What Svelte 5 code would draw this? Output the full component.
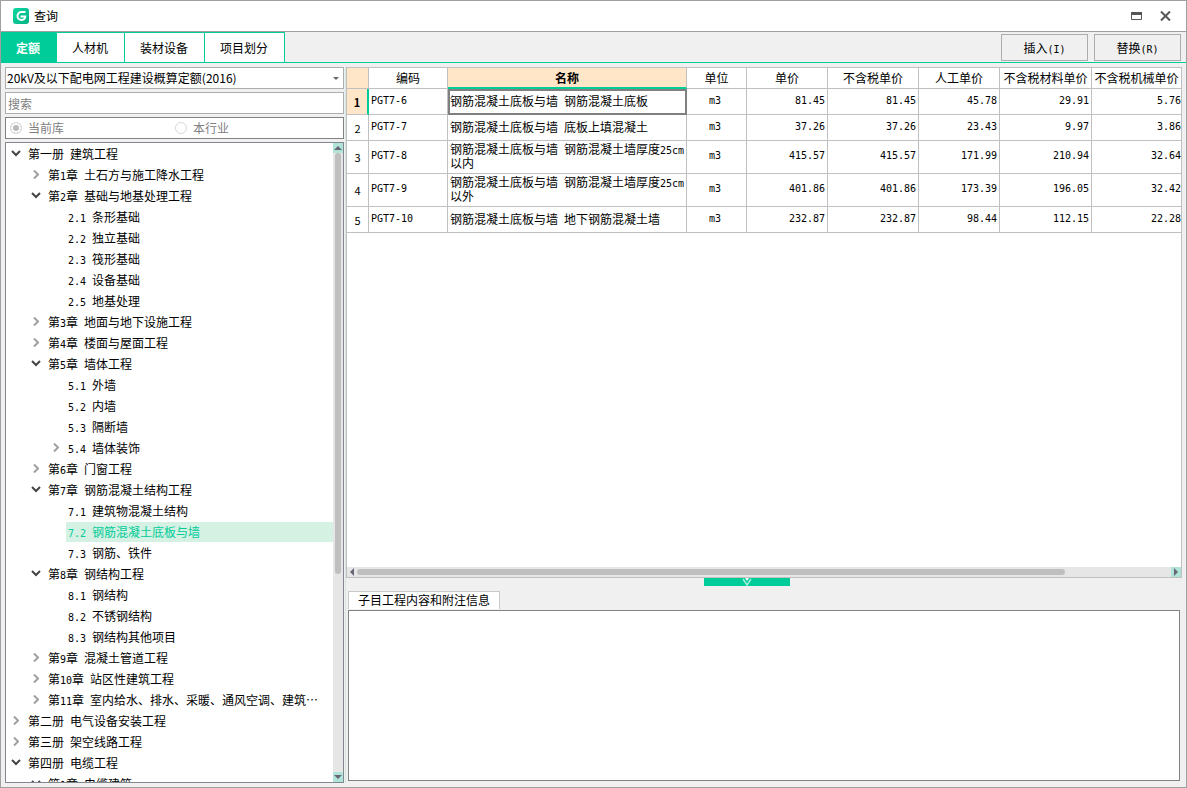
<script lang="ts">
  type Node = { text: string; depth: number; open?: boolean };

  const tabs = ['定额', '人材机', '装材设备', '项目划分'];
  let activeTab = $state('定额');
  let scope = $state('current');
  let keyword = $state('');
  let selected = $state('7.2 钢筋混凝土底板与墙');

  let nodes: Node[] = $state([
    { text: '第一册 建筑工程', depth: 0, open: true },
    { text: '第1章 土石方与施工降水工程', depth: 1, open: false },
    { text: '第2章 基础与地基处理工程', depth: 1, open: true },
    { text: '2.1 条形基础', depth: 2 },
    { text: '2.2 独立基础', depth: 2 },
    { text: '2.3 筏形基础', depth: 2 },
    { text: '2.4 设备基础', depth: 2 },
    { text: '2.5 地基处理', depth: 2 },
    { text: '第3章 地面与地下设施工程', depth: 1, open: false },
    { text: '第4章 楼面与屋面工程', depth: 1, open: false },
    { text: '第5章 墙体工程', depth: 1, open: true },
    { text: '5.1 外墙', depth: 2 },
    { text: '5.2 内墙', depth: 2 },
    { text: '5.3 隔断墙', depth: 2 },
    { text: '5.4 墙体装饰', depth: 2, open: false },
    { text: '第6章 门窗工程', depth: 1, open: false },
    { text: '第7章 钢筋混凝土结构工程', depth: 1, open: true },
    { text: '7.1 建筑物混凝土结构', depth: 2 },
    { text: '7.2 钢筋混凝土底板与墙', depth: 2 },
    { text: '7.3 钢筋、铁件', depth: 2 },
    { text: '第8章 钢结构工程', depth: 1, open: true },
    { text: '8.1 钢结构', depth: 2 },
    { text: '8.2 不锈钢结构', depth: 2 },
    { text: '8.3 钢结构其他项目', depth: 2 },
    { text: '第9章 混凝土管道工程', depth: 1, open: false },
    { text: '第10章 站区性建筑工程', depth: 1, open: false },
    { text: '第11章 室内给水、排水、采暖、通风空调、建筑…', depth: 1, open: false },
    { text: '第二册 电气设备安装工程', depth: 0, open: false },
    { text: '第三册 架空线路工程', depth: 0, open: false },
    { text: '第四册 电缆工程', depth: 0, open: true },
    { text: '第1章 电缆建筑', depth: 1, open: true },
  ]);

  // children of a closed node stay hidden until the depth comes back up
  const visibleNodes = $derived.by(() => {
    const list: Node[] = [];
    let closedAt = Infinity;
    for (const node of nodes) {
      if (node.depth > closedAt) continue;
      closedAt = node.open === false ? node.depth : Infinity;
      list.push(node);
    }
    return list;
  });

  const columns = ['编码', '名称', '单位', '单价', '不含税单价', '人工单价', '不含税材料单价', '不含税机械单价'];

  const rows = [
    { code: 'PGT7-6', name: '钢筋混凝土底板与墙 钢筋混凝土底板', unit: 'm3', prices: ['81.45', '81.45', '45.78', '29.91', '5.76'] },
    { code: 'PGT7-7', name: '钢筋混凝土底板与墙 底板上填混凝土', unit: 'm3', prices: ['37.26', '37.26', '23.43', '9.97', '3.86'] },
    { code: 'PGT7-8', name: '钢筋混凝土底板与墙 钢筋混凝土墙厚度25cm以内', unit: 'm3', prices: ['415.57', '415.57', '171.99', '210.94', '32.64'] },
    { code: 'PGT7-9', name: '钢筋混凝土底板与墙 钢筋混凝土墙厚度25cm以外', unit: 'm3', prices: ['401.86', '401.86', '173.39', '196.05', '32.42'] },
    { code: 'PGT7-10', name: '钢筋混凝土底板与墙 地下钢筋混凝土墙', unit: 'm3', prices: ['232.87', '232.87', '98.44', '112.15', '22.28'] },
  ];
  let currentRow = $state(0);

  function splitRuns(text: string) {
    return text.match(/[\x20-\x7e]+|[^\x20-\x7e]+/g) ?? [];
  }
</script>

<!-- half-width characters take exactly half of a Chinese one -->
{#snippet mixed(text: string)}
  {#each splitRuns(text) as run}{#if run.charCodeAt(0) < 127}<span class="half">{run}</span>{:else}{run}{/if}{/each}
{/snippet}

<div class="window" lang="zh-CN">
  <header class="title-bar">
    <svg class="logo" viewBox="0 0 16 16" aria-hidden="true">
      <defs>
        <linearGradient id="logo-fill" x1="0" y1="0" x2="1" y2="1">
          <stop offset="0" stop-color="#0bd8a0" />
          <stop offset="1" stop-color="#04b184" />
        </linearGradient>
      </defs>
      <rect width="16" height="16" rx="3" fill="url(#logo-fill)" />
      <path d="M12.500 4H8.500a4 4 0 0 0 0 8c2 0 3.500-1 3.800-3.500H7.500" fill="none" stroke="#fff" stroke-width="2" />
    </svg>
    <h1>查询</h1>
    <button class="win-btn" aria-label="最大化">
      <svg width="11" height="8" viewBox="0 0 11 8"><path d="M.5 .5h10v7h-10z" fill="none" stroke="#555" /><path d="M0 0h11v3H0z" fill="#555" /></svg>
    </button>
    <button class="win-btn" aria-label="关闭">
      <svg width="11" height="10" viewBox="0 0 11 10"><path d="M1 .5l9 9M10 .5l-9 9" stroke="#555" stroke-width="2" /></svg>
    </button>
  </header>

  <div class="toolbar">
    <nav class="tabs">
      {#each tabs as tab}
        <button class="tab" class:active={tab === activeTab} onclick={() => (activeTab = tab)}>{tab}</button>
      {/each}
    </nav>
    <div class="actions">
      <button class="action">{@render mixed('插入(I)')}</button>
      <button class="action">{@render mixed('替换(R)')}</button>
    </div>
  </div>

  <main>
    <aside class="sidebar">
      <div class="select-box">
        <select aria-label="定额库">
          <option>20kV及以下配电网工程建设概算定额(2016)</option>
        </select>
        <svg width="6" height="3" viewBox="0 0 6 3" aria-hidden="true"><path d="M0 0h6L3 3z" fill="#666" /></svg>
      </div>
      <input class="search" type="text" placeholder="搜索" aria-label="搜索" bind:value={keyword} />
      <div class="scope">
        <label><input type="radio" name="scope" value="current" bind:group={scope} disabled />当前库</label>
        <label><input type="radio" name="scope" value="industry" bind:group={scope} disabled />本行业</label>
      </div>

      <div class="tree-box">
        <ul class="tree">
          {#each visibleNodes as node}
            <li style="padding-left: {node.depth * 20}px">
              {#if node.open === undefined}
                <span class="toggle"></span>
              {:else}
                <button class="toggle" aria-label="展开或收起" aria-expanded={node.open} onclick={() => (node.open = !node.open)}>
                  {#if node.open}
                    <svg width="10" height="7" viewBox="0 0 10 7"><path d="M1 1l4 4 4-4" fill="none" stroke="#444" stroke-width="2" /></svg>
                  {:else}
                    <svg width="6" height="9" viewBox="0 0 6 9"><path d="M1 .500l4 4-4 4" fill="none" stroke="#a0a0a0" stroke-width="2" /></svg>
                  {/if}
                </button>
              {/if}
              <button class="label" class:selected={node.text === selected} onclick={() => (selected = node.text)}>{@render mixed(node.text)}</button>
            </li>
          {/each}
        </ul>
        <div class="v-scroll">
          <button class="scroll-btn" aria-label="向上滚动">
            <svg width="8" height="4" viewBox="0 0 8 4"><path d="M0 4h8L4 0z" fill="#667" /></svg>
          </button>
          <div class="v-track"><div class="v-thumb"></div></div>
          <button class="scroll-btn" aria-label="向下滚动">
            <svg width="8" height="4" viewBox="0 0 8 4"><path d="M0 0h8L4 4z" fill="#667" /></svg>
          </button>
        </div>
      </div>
    </aside>

    <section class="content">
      <div class="grid">
        <div class="grid-body">
          <table>
            <colgroup>
              <col class="w-index" />
              <col class="w-code" />
              <col />
              <col class="w-unit" />
              <col class="w-price" />
              <col class="w-net" />
              <col class="w-price" />
              <col class="w-material" />
              <col class="w-machine" />
            </colgroup>
            <thead>
              <tr>
                <th class="corner" aria-label="序号"></th>
                {#each columns as column}
                  <th class:current={column === '名称'}>{column}</th>
                {/each}
              </tr>
            </thead>
            <tbody>
              {#each rows as row, i}
                <tr class:current={i === currentRow} onclick={() => (currentRow = i)}>
                  <th class="index">{i + 1}</th>
                  <td class="half">{row.code}</td>
                  <td class="name">{@render mixed(row.name)}</td>
                  <td class="half unit">{row.unit}</td>
                  {#each row.prices as price}
                    <td class="half price">{price}</td>
                  {/each}
                </tr>
              {/each}
            </tbody>
          </table>
        </div>
        <div class="h-scroll">
          <button class="scroll-btn plain" aria-label="向左滚动">
            <svg width="4" height="8" viewBox="0 0 4 8"><path d="M4 0v8L0 4z" fill="#667" /></svg>
          </button>
          <div class="h-track"><div class="h-thumb"></div></div>
          <button class="scroll-btn" aria-label="向右滚动">
            <svg width="4" height="8" viewBox="0 0 4 8"><path d="M0 0v8l4-4z" fill="#667" /></svg>
          </button>
        </div>
      </div>

      <button class="splitter" aria-label="收起附注信息">
        <svg width="10" height="8" viewBox="0 0 10 8"><path d="M3 0h4L5 3z" fill="#fff" /><path d="M1 1l4 6 4-6" fill="none" stroke="#a5f0da" stroke-width="1.500" /></svg>
      </button>

      <div class="notes">
        <button class="notes-tab">子目工程内容和附注信息</button>
        <textarea aria-label="子目工程内容和附注信息" readonly></textarea>
      </div>
    </section>
  </main>
</div>

<style>
  :global(body) {
    margin: 0;
  }

  .window {
    display: flex;
    flex-direction: column;
    box-sizing: border-box;
    height: 100vh;
    border: 1px solid #a0a0a0;
    background: #f0f0f0;
    color: #000;
    font-family: 'Noto Sans CJK SC', sans-serif;
    font-size: 12px;
    line-height: 14px;
  }

  button,
  input,
  select,
  textarea {
    box-sizing: border-box;
    margin: 0;
    padding: 0;
    border: 0;
    border-radius: 0;
    background: none;
    color: inherit;
    font: inherit;
  }

  svg {
    display: block;
  }

  .half {
    font-family: 'DejaVu Sans Mono', monospace;
    font-size: 10px;
    line-height: 10px;
    white-space: pre;
  }

  .title-bar {
    display: flex;
    align-items: center;
    height: 30px;
    padding: 0 12px;
    border-bottom: 1px solid #a0a0a0;
    background: #fff;
  }

  .logo {
    width: 16px;
    height: 16px;
  }

  h1 {
    flex: 1;
    margin: 0 0 0 5px;
    font-size: 12px;
    font-weight: normal;
  }

  .win-btn {
    display: flex;
    align-items: center;
    justify-content: center;
    width: 18px;
    height: 18px;
    margin-left: 11px;
  }

  .toolbar {
    display: flex;
    justify-content: space-between;
    height: 30px;
    border-bottom: 1px solid #00cc99;
  }

  .tabs {
    display: flex;
  }

  .tab {
    padding: 0 16px 0 15px;
    border-top: 1px solid #00cc99;
    border-right: 1px solid #00cc99;
    background: #fff;
  }

  .tab.active {
    background: #00cc99;
    color: #fff;
    font-weight: bold;
  }

  .actions {
    display: flex;
    gap: 6px;
    padding: 2px 5px 1px 0;
  }

  .action {
    width: 87px;
    border: 1px solid #adadad;
  }

  main {
    display: flex;
    flex: 1;
    min-height: 0;
    padding: 4px;
  }

  .sidebar {
    display: flex;
    flex-direction: column;
    gap: 3px;
    flex: none;
    width: 339px;
  }

  .select-box {
    display: flex;
    align-items: center;
    height: 22px;
    box-sizing: border-box;
    padding-right: 4px;
    border: 1px solid #adadad;
    background: #fff;
  }

  .select-box select {
    flex: 1;
    appearance: none;
    padding-left: 1px;
  }

  .search {
    height: 22px;
    padding: 0 2px;
    border: 1px solid #adadad;
    background: #fff;
  }

  .search::placeholder {
    color: #808080;
  }

  .scope {
    display: flex;
    align-items: center;
    box-sizing: border-box;
    height: 22px;
    padding-left: 4px;
    border: 1px solid #828282;
    background: #fff;
    color: #808080;
  }

  .scope label {
    display: flex;
    align-items: center;
    gap: 6px;
    width: 165px;
  }

  .scope input {
    appearance: none;
    width: 12px;
    height: 12px;
    border: 1px solid #d9d9d9;
    border-radius: 50%;
    background: #fff;
  }

  .scope input:checked {
    background: #b8b8b8;
    box-shadow: inset 0 0 0 2px #fff;
  }

  .tree-box {
    display: flex;
    flex: 1;
    min-height: 0;
    border: 1px solid #828790;
    background: #fff;
  }

  .tree {
    flex: 1;
    min-width: 0;
    margin: 0;
    padding: 0;
    overflow: hidden;
    list-style: none;
  }

  .tree li {
    display: flex;
    height: 21px;
  }

  .toggle {
    display: flex;
    align-items: center;
    justify-content: center;
    flex: none;
    width: 20px;
  }

  .label {
    flex: 1;
    min-width: 0;
    margin-top: 1px;
    padding-left: 2px;
    overflow: hidden;
    text-align: left;
    white-space: nowrap;
  }

  .label.selected {
    background: #d4f1e3;
    color: #00cc99;
  }

  .v-scroll {
    display: flex;
    flex-direction: column;
    width: 10px;
    background: #e6e6e6;
  }

  .scroll-btn {
    display: flex;
    align-items: center;
    justify-content: center;
    flex: none;
    width: 10px;
    height: 10px;
    background: #b0e4d8;
  }

  .scroll-btn.plain {
    background: none;
  }

  .v-track {
    flex: 1;
    padding: 0 2px;
  }

  .v-thumb {
    height: 68%;
    border-radius: 3px;
    background: #bfbfbf;
  }

  .content {
    display: flex;
    flex-direction: column;
    flex: 1;
    min-width: 0;
    margin-left: 1px;
    border-left: 1px solid #d5e6e6;
  }

  .grid {
    display: flex;
    flex-direction: column;
    flex: 1;
    min-height: 0;
    border: 1px solid #c0c0c0;
    background: #fff;
  }

  .grid-body {
    flex: 1;
    min-height: 0;
    overflow: hidden;
  }

  table {
    width: 100%;
    table-layout: fixed;
    border-collapse: separate;
    border-spacing: 0;
  }

  .w-index { width: 22px; }
  .w-code { width: 79px; }
  .w-unit { width: 60px; }
  .w-price { width: 81px; }
  .w-net { width: 91px; }
  .w-material { width: 92px; }
  .w-machine { width: 89px; }

  th,
  td {
    box-sizing: border-box;
    height: 26px;
    padding: 1px 2px 3px;
    border-right: 1px solid #c0c0c0;
    border-bottom: 1px solid #c0c0c0;
    font-weight: normal;
  }

  tr > :last-child {
    padding-right: 0;
    border-right: 0;
  }

  thead th {
    height: 21px;
    padding: 2px 0;
    white-space: nowrap;
  }

  thead .corner {
    background: #ffe6c8;
  }

  thead .current {
    border-bottom: 2px solid #00cc99;
    background: #ffe6c8;
    font-weight: bold;
  }

  .index {
    padding: 1px 0;
    font-size: 11px;
    text-align: center;
  }

  td.name {
    padding-right: 0;
    word-break: break-all;
  }

  td.unit {
    padding-right: 5px;
    text-align: center;
  }

  td.price {
    text-align: right;
  }

  tr.current .index {
    border-right: 2px solid #00cc99;
    background: #ffe6c8;
    font-weight: bold;
  }

  tr.current .name {
    outline: 2px solid #808080;
    outline-offset: -2px;
  }

  .h-scroll {
    display: flex;
    height: 10px;
    background: #e6e6e6;
  }

  .h-track {
    flex: 1;
    padding: 2px 0;
  }

  .h-thumb {
    width: 87%;
    height: 6px;
    border-radius: 3px;
    background: #bfbfbf;
  }

  .splitter {
    display: flex;
    justify-content: center;
    align-self: center;
    width: 86px;
    height: 8px;
    margin-right: 34px;
    background: #00cc99;
  }

  .notes {
    display: flex;
    flex-direction: column;
    align-items: flex-start;
    box-sizing: border-box;
    flex: none;
    height: 197px;
    padding: 5px 2px 2px;
  }

  .notes-tab {
    height: 18px;
    padding: 0 9px 2px;
    border: 1px solid #c8c8c8;
    border-bottom: 0;
    background: #fff;
  }

  textarea {
    flex: 1;
    width: 100%;
    margin-top: 1px;
    border: 1px solid #828282;
    background: #fff;
    resize: none;
  }
</style>
